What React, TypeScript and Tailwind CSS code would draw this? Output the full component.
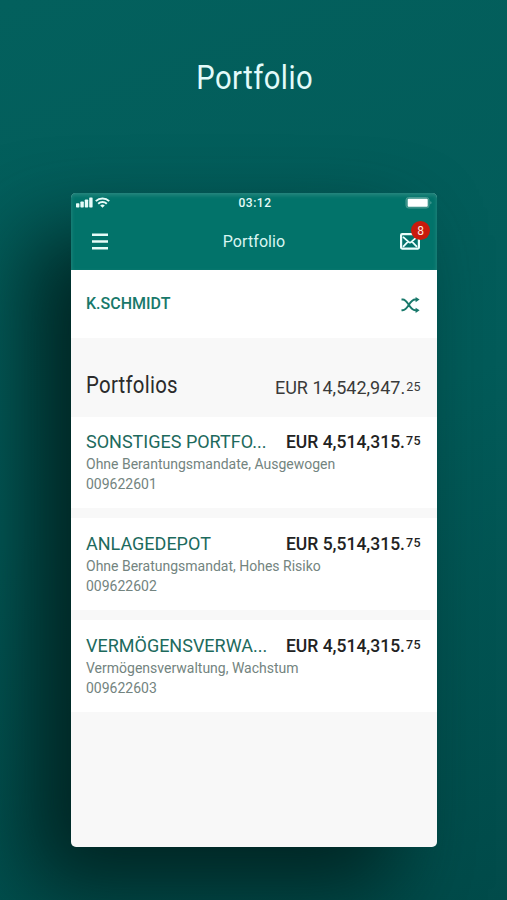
import { clsx } from "clsx";

interface AmountProps {
  value: string;
  cents: string;
  bold?: boolean;
}

interface Portfolio {
  id: string;
  name: string;
  mandate: string;
  value: string;
  cents: string;
}

const portfolios: Portfolio[] = [
  { id: "009622601", name: "SONSTIGES PORTFO...", mandate: "Ohne Berantungsmandate, Ausgewogen", value: "4,514,315", cents: "75" },
  { id: "009622602", name: "ANLAGEDEPOT", mandate: "Ohne Beratungsmandat, Hohes Risiko", value: "5,514,315", cents: "75" },
  { id: "009622603", name: "VERMÖGENSVERWA...", mandate: "Vermögensverwaltung, Wachstum", value: "4,514,315", cents: "75" },
];

function Amount({ value, cents, bold }: AmountProps) {
  return (
    <div className={clsx("flex shrink-0 gap-px whitespace-nowrap", bold ? "font-medium text-[#222]" : "text-[#3a3a3a]")}>
      <span className={clsx("leading-6", bold ? "text-[17.5px]" : "text-[18px]")}>EUR {value}.</span>
      <span className="text-[12.5px] leading-[21px] tracking-[0.4px]">{cents}</span>
    </div>
  );
}

function StatusBar() {
  return (
    <div className="grid h-5 grid-cols-3 items-center pl-[5px] pr-[5px] text-[#e6fbf8]">
      <div className="-mt-px flex items-center gap-1">
        <svg width="17" height="11" viewBox="0 0 17 11" fill="currentColor">
          <rect x="0" y="6.2" width="3.4" height="4.3" rx="0.7" />
          <rect x="4.4" y="4.6" width="3.4" height="5.9" rx="0.7" />
          <rect x="8.8" y="2.6" width="3.4" height="7.9" rx="0.7" />
          <rect x="13.2" y="0.4" width="3.4" height="10.1" rx="0.7" />
        </svg>
        <svg className="-ml-0.5" width="15" height="11" viewBox="0 0 15 11" fill="none" stroke="currentColor" strokeWidth="2">
          <path d="M0.8 4.1a9.6 9.6 0 0 1 13.4 0" />
          <path d="M3.2 6.7a6.2 6.2 0 0 1 8.6 0" />
          <path d="M7.5 10.8 5.2 8.5a3.3 3.3 0 0 1 4.6 0z" fill="currentColor" stroke="none" />
        </svg>
      </div>
      <span className="pl-0.5 text-center text-[12px] font-medium leading-5 tracking-[0.5px]">03:12</span>
      <svg className="justify-self-end" width="27" height="12" viewBox="0 0 27 12">
        <rect x="1" y="0.5" width="23" height="10.5" rx="2.5" fill="#2f8a81" stroke="#4a9c93" />
        <rect x="2.7" y="1.8" width="20" height="8" rx="1" fill="#fff" />
        <path d="M25.4 4.2v3a1.6 1.6 0 0 0 0-3z" fill="#5ba69e" />
      </svg>
    </div>
  );
}

function NavBar() {
  return (
    <div className="grid h-[57px] grid-cols-3 items-center pl-[21px] pr-[17px]">
      <svg width="17" height="17" viewBox="0 0 17 17" fill="#e6fbf8">
        <path d="M0 0.5h16v2.6h-16zM0 7.2h16v2.6h-16zM0 13.9h16v2.6h-16z" />
      </svg>
      <span className="-ml-1 text-center text-[16px] tracking-[0.1px] text-[#d9f5f1]">Portfolio</span>
      <div className="relative justify-self-end">
        <svg width="20" height="17" viewBox="0 0 20 17" fill="none" stroke="#eafffb" strokeWidth="2.2">
          <rect x="1.1" y="1.2" width="17.8" height="14.4" rx="1" />
          <path d="M3 3.8 8.6 8.9q1.4 1.2 2.8 0L17 3.8M3 13.8l4.8-5M17 13.8l-4.8-5" strokeWidth="1.8" />
        </svg>
        <span className="absolute -right-[10px] -top-[12px] flex size-[19px] items-center justify-center rounded-full bg-[#c81a0c] text-[12px] text-[#ffe3dd]">
          8
        </span>
      </div>
    </div>
  );
}

function PortfolioCard({ name, mandate, id, value, cents }: Portfolio) {
  return (
    <div className="h-[92px] bg-white pl-[15px] pr-4 pt-[13px] first:h-[91px] even:pt-[14px] last:pt-[14px]">
      <div className="flex items-center justify-between">
        <span className="whitespace-nowrap text-[18px] leading-6 text-[#1d6a5d]">{name}</span>
        <Amount value={value} cents={cents} bold />
      </div>
      <p className="text-[14px] leading-5 text-[#738480]">{mandate}</p>
      <p className="-mt-px pt-px text-[14px] leading-5 text-[#738480]">{id}</p>
    </div>
  );
}

export default function App() {
  return (
    <div className="h-[900px] w-[507px] overflow-hidden bg-linear-160 from-[#03605d] via-[#025b59] to-[#014b4a] font-[Roboto,sans-serif]">
      <div className="flex h-[193px] justify-center pt-[56px]">
        <h1 className="h-10 origin-center scale-x-[0.86] pl-[3px] text-[34px] leading-[42px] tracking-[0.5px] text-[#e2fbfa]">Portfolio</h1>
      </div>

      <div className="ml-[71px] flex h-[654px] w-[366px] flex-col overflow-hidden rounded-[5px] bg-[#f8f8f8] shadow-[-42px_42px_84px_0_#002422]">
        <header className="h-[77px] bg-[#02736a] shadow-[inset_0_2px_4px_#2d8a82]">
          <StatusBar />
          <NavBar />
        </header>

        <div className="flex h-[68px] items-center justify-between bg-white pl-[15px] pr-[17px]">
          <span className="text-[16px] font-medium text-[#18786a]">K.SCHMIDT</span>
          <svg className="mt-0.5" width="19" height="16" viewBox="0 0 19 16" fill="none" stroke="#18786a" strokeWidth="1.9">
            <path d="M0.5 2.5h1.3c5.4 0 6.6 10.8 12.4 10.8h1M0.5 13.3h1.3c5.4 0 6.6-10.8 12.4-10.8h1" />
            <path d="M14.6 0v5.2l4-2.6zM14.6 10.7v5.2l4-2.6z" fill="#18786a" stroke="none" />
          </svg>
        </div>

        <div className="flex h-[79px] items-center justify-between pl-[15px] pr-4 pt-5">
          <h2 className="-mt-[5px] w-0 origin-left scale-x-[0.85] text-[24px] tracking-[0.3px] text-[#2b2b2b]">Portfolios</h2>
          <Amount value="14,542,947" cents="25" />
        </div>

        <div className="flex flex-col gap-[10px]">
          {portfolios.map((p) => (
            <PortfolioCard key={p.id} {...p} />
          ))}
        </div>
      </div>
    </div>
  );
}
